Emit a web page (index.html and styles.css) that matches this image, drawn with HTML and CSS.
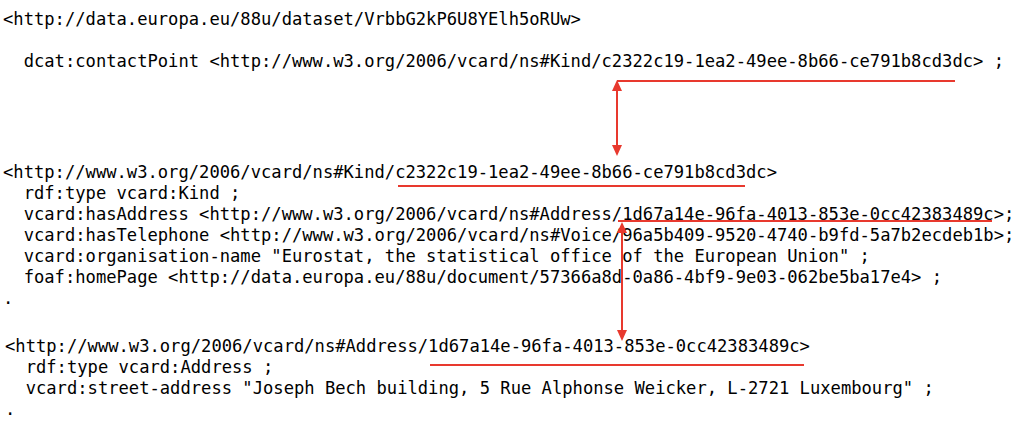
FILE: index.html
```html
<!DOCTYPE html>
<html lang="en">
<head>
<meta charset="utf-8">
<title>DCAT contact point</title>
<link rel="stylesheet" href="styles.css">
</head>
<body>
<main class="doc">
<pre class="block b1">&lt;http://data.europa.eu/88u/dataset/VrbbG2kP6U8YElh5oRUw&gt;

  dcat:contactPoint &lt;http://www.w3.org/2006/vcard/ns#Kind/c2322c19-1ea2-49ee-8b66-ce791b8cd3dc&gt; ;</pre>
<pre class="block b2">&lt;http://www.w3.org/2006/vcard/ns#Kind/c2322c19-1ea2-49ee-8b66-ce791b8cd3dc&gt;
  rdf:type vcard:Kind ;
  vcard:hasAddress &lt;http://www.w3.org/2006/vcard/ns#Address/1d67a14e-96fa-4013-853e-0cc42383489c&gt;;
  vcard:hasTelephone &lt;http://www.w3.org/2006/vcard/ns#Voice/96a5b409-9520-4740-b9fd-5a7b2ecdeb1b&gt;;
  vcard:organisation-name "Eurostat, the statistical office of the European Union" ;
  foaf:homePage &lt;http://data.europa.eu/88u/document/57366a8d-0a86-4bf9-9e03-062be5ba17e4&gt; ;
.</pre>
<pre class="block b3">&lt;http://www.w3.org/2006/vcard/ns#Address/1d67a14e-96fa-4013-853e-0cc42383489c&gt;
  rdf:type vcard:Address ;
  vcard:street-address "Joseph Bech building, 5 Rue Alphonse Weicker, L-2721 Luxembourg" ;
.</pre>
<svg class="notes" width="1024" height="422" viewBox="0 0 1024 422" aria-hidden="true">
  <g class="mark">
    <line x1="617" y1="81" x2="955" y2="81"/>
    <line x1="617" y1="88" x2="617" y2="148"/>
    <line x1="398" y1="186" x2="745" y2="186"/>
    <line x1="618" y1="221" x2="992" y2="221"/>
    <line x1="622" y1="230" x2="622" y2="333"/>
    <line x1="430" y1="365" x2="804" y2="365"/>
  </g>
  <g class="head">
    <polygon points="617,80 612,91 622,91"/>
    <polygon points="617,156 612,145 622,145"/>
    <polygon points="622,222 617,233 627,233"/>
    <polygon points="622,341 617,330 627,330"/>
  </g>
</svg>
</main>
</body>
</html>
```
FILE: styles.css
```css
html, body {
  margin: 0;
  padding: 0;
  background: #ffffff;
}

.doc {
  position: relative;
  width: 1024px;
  height: 422px;
  overflow: hidden;
  padding-top: 9px;
  box-sizing: border-box;
}

.block {
  margin: 0;
  font-family: "DejaVu Sans Mono", "Liberation Mono", monospace;
  font-size: 17.15px;
  line-height: 21px;
  color: #000000;
  white-space: pre;
  padding-left: 3px;
}

.b2 {
  margin-top: 90px;
}

.b3 {
  margin-top: 27px;
  padding-left: 5px;
}

.notes {
  position: absolute;
  left: 0;
  top: 0;
  pointer-events: none;
}

.mark line {
  stroke: #e8392e;
  stroke-width: 2;
}

.head polygon {
  fill: #e8392e;
}
```
